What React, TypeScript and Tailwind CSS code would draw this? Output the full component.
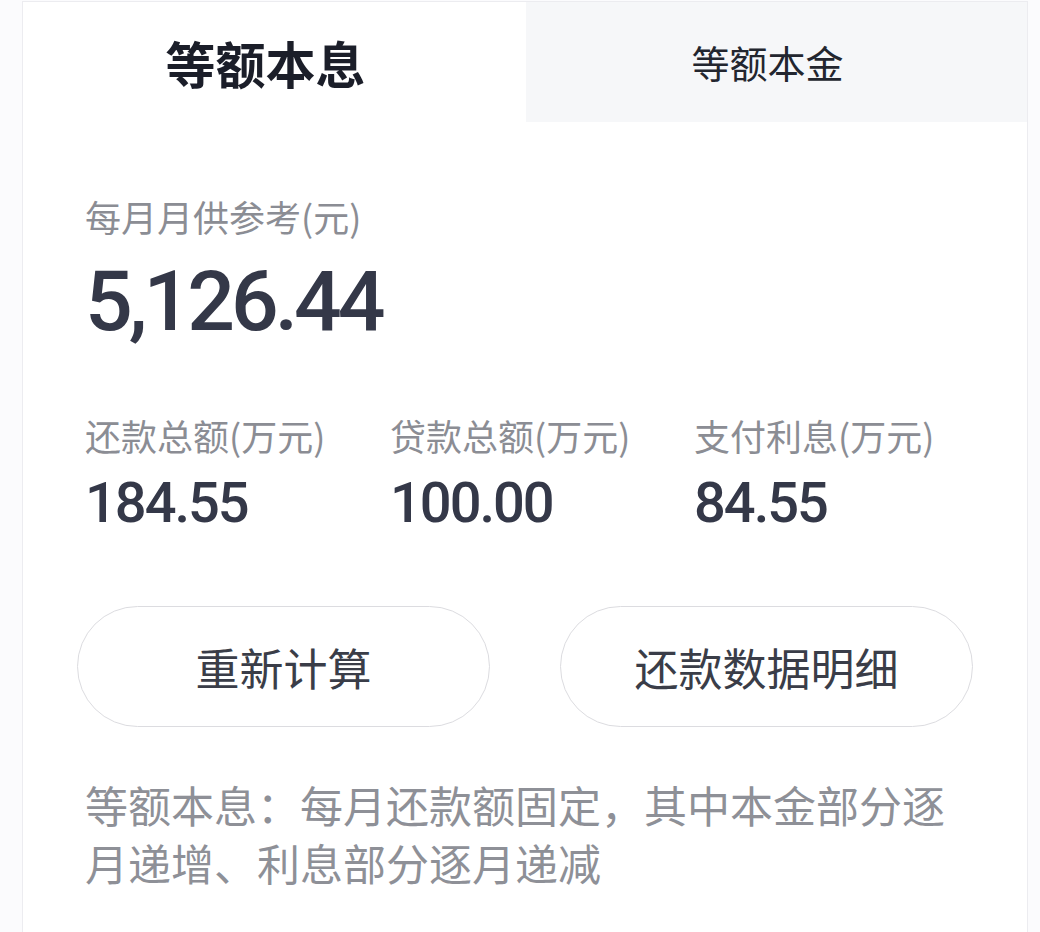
import React from "react";

const cjk = "font-['Noto_Sans_CJK_SC',sans-serif]";
const num = "font-['Roboto','Noto_Sans_CJK_SC',sans-serif]";

const stats = [
  { label: "还款总额(万元)", value: "184.55" },
  { label: "贷款总额(万元)", value: "100.00" },
  { label: "支付利息(万元)", value: "84.55" },
];

export default function App() {
  return (
    <div className={`h-[932px] overflow-hidden bg-[#fbfbfd] pl-[22px] pr-[12px] pt-[1px] ${cjk}`}>
      <div className="h-full border border-b-0 border-[#ececf0] bg-white">
        {/* tabs */}
        <div className="flex h-[120px]">
          <div className="flex w-[503px] items-center justify-center pr-[18px] text-[50px] font-bold leading-none text-[#1b1e29]">
            等额本息
          </div>
          <div className="flex flex-1 items-center justify-center bg-[#f6f7f9] pr-[18px] text-[38px] leading-none text-[#23262f]">
            等额本金
          </div>
        </div>

        <div className="px-[62px]">
          <div className="mt-[76px] text-[36px] leading-[36px] text-[#8b8d94]">每月月供参考(元)</div>
          <div className={`mt-[25px] text-[84px] font-medium leading-[86px] tracking-[-4px] text-[#343848] ${num}`}>
            5,126.44
          </div>

          <div className="mt-[72px] grid grid-cols-[305px_304px_1fr]">
            {stats.map((s) => (
              <div key={s.label}>
                <div className="text-[36px] leading-[36px] text-[#8b8d94]">{s.label}</div>
                <div className={`mt-[21px] text-[56px] font-medium leading-[58px] tracking-[-2px] text-[#343848] ${num}`}>
                  {s.value}
                </div>
              </div>
            ))}
          </div>

          <div className="-mx-2 mt-[74px] flex gap-[70px]">
            <button className="flex h-[121px] flex-1 items-center justify-center rounded-full border border-[#dcdce0] bg-white text-[44px] text-[#3a3d48]">
              重新计算
            </button>
            <button className="flex h-[121px] flex-1 items-center justify-center rounded-full border border-[#dcdce0] bg-white text-[44px] text-[#3a3d48]">
              还款数据明细
            </button>
          </div>

          <p className="mt-[48px] text-[43px] leading-[58px] text-[#8e9097]">
            等额本息：每月还款额固定，其中本金部分逐月递增、利息部分逐月递减
          </p>
        </div>
      </div>
    </div>
  );
}
